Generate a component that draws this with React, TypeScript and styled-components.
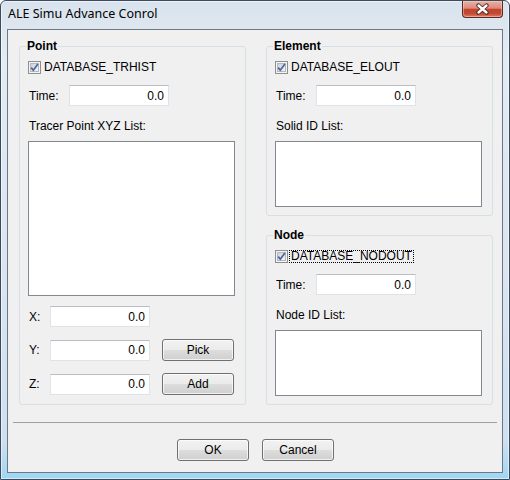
import React from 'react';
import styled, { createGlobalStyle } from 'styled-components';

const GlobalStyle = createGlobalStyle`
    html, body {
        margin: 0;
        padding: 0;
        background: #ffffff;
    }
    body {
        font-family: "Liberation Sans", Arial, sans-serif;
        font-size: 12px;
        color: #000000;
    }
`;

/* tslint:disable:variable-name */
const Window = styled.div`
    width: 510px;
    height: 480px;
    box-sizing: border-box;
    display: flex;
    flex-direction: column;
    padding: 0 6px 6px 6px;
    border: 1px solid #3b4a5c;
    border-radius: 6px 6px 0 0;
    background: linear-gradient(180deg, #d9e3ed 0%, #e3ebf3 12%, #dae5f0 55%, #cfe0f1 92%, #9fd6f3 100%);
    box-shadow: inset 0 0 0 1px rgba(255, 255, 255, 0.55);
`;

const TitleBar = styled.div`
    height: 28px;
    flex: none;
    display: flex;
    align-items: flex-start;
    justify-content: space-between;
`;

const Title = styled.div`
    margin: 5px 0 0 1px;
    font-family: "Noto Sans", "Open Sans", sans-serif;
    font-size: 12.5px;
    line-height: 16px;
    color: #000000;
`;

const CloseButton = styled.div`
    width: 41px;
    height: 17px;
    box-sizing: border-box;
    display: flex;
    align-items: center;
    justify-content: center;
    border: 1px solid #5b2a24;
    border-top: none;
    border-radius: 0 0 4px 4px;
    background: linear-gradient(180deg, #eab0a3 0%, #dc8b7b 45%, #c4432d 52%, #c24a33 78%, #de7d62 100%);
    box-shadow: inset 0 0 0 1px rgba(255, 220, 210, 0.45);
`;

const Client = styled.div`
    flex: 1;
    display: flex;
    flex-direction: column;
    border: 1px solid #6c7886;
    background: #f0f0f0;
    padding: 10px 0 11px 0;
`;

const Columns = styled.div`
    display: flex;
    align-items: flex-start;
    gap: 20px;
    padding: 0 9px 0 11px;
`;

const Column = styled.div`
    display: flex;
    flex-direction: column;
    gap: 13px;
`;

const Group = styled.fieldset`
    width: 227px;
    box-sizing: border-box;
    margin: 0;
    padding: 0;
    min-width: 0;
    border: 1px solid #d5dfe5;
    border-radius: 3px;
`;

const GroupTitle = styled.legend`
    margin-left: 6px;
    padding: 0 1px;
    font-weight: bold;
    font-size: 12px;
    line-height: 13px;
`;

const GroupBody = styled.div<{ $bottom: number }>`
    display: flex;
    flex-direction: column;
    padding: 8px 10px ${props => props.$bottom}px 8px;
`;

const CheckRow = styled.div`
    display: flex;
    align-items: flex-start;
    height: 13px;
`;

const CheckLabel = styled.span<{ $focused?: boolean }>`
    margin-left: 1px;
    padding: 0 1px;
    line-height: 11px;
    border: 1px ${props => (props.$focused ? 'dotted #000000' : 'solid transparent')};
`;

const FieldRow = styled.div<{ $top: number }>`
    display: flex;
    align-items: center;
    margin-top: ${props => props.$top}px;
`;

const FieldLabel = styled.span<{ $width: number }>`
    width: ${props => props.$width}px;
    padding-left: 1px;
    box-sizing: border-box;
    line-height: 14px;
`;

const TextBox = styled.input`
    width: 100px;
    height: 21px;
    box-sizing: border-box;
    margin: 0;
    padding: 0 4px;
    font: inherit;
    line-height: 14px;
    text-align: right;
    color: #000000;
    background: #ffffff;
    border: 1px solid #dfe3e8;
    border-top-color: #b9bdc4;
    outline: none;
`;

const ListLabel = styled.div`
    margin-top: 13px;
    padding-left: 1px;
    line-height: 14px;
`;

const ListBox = styled.div<{ $height: number }>`
    margin-top: 8px;
    width: 207px;
    height: ${props => props.$height}px;
    box-sizing: border-box;
    background: #ffffff;
    border: 1px solid #828790;
`;

const PushButton = styled.button<{ $gapLeft?: number }>`
    width: 72px;
    height: 22px;
    box-sizing: border-box;
    margin: 0 0 0 ${props => props.$gapLeft ?? 0}px;
    padding: 0;
    font: inherit;
    line-height: 14px;
    color: #000000;
    border: 1px solid #707070;
    border-radius: 3px;
    background: linear-gradient(180deg, #f2f2f2 0%, #ebebeb 48%, #dddddd 52%, #cfcfcf 100%);
    box-shadow: inset 0 0 0 1px rgba(255, 255, 255, 0.7);
`;

const Separator = styled.div`
    margin: 17px 5px 0 5px;
    height: 0;
    border-top: 1px solid #a0a0a0;
`;

const ButtonBar = styled.div`
    display: flex;
    justify-content: center;
    gap: 13px;
    margin-top: 16px;
    padding-left: 1px;
`;

const CloseGlyph = () => (
    <svg width="15" height="12" viewBox="0 0 15 12">
        <path d="M3.5 2.5 L11.5 9.5 M11.5 2.5 L3.5 9.5" stroke="#4a1f1a" strokeWidth="4.2" strokeLinecap="round" fill="none" />
        <path d="M3.5 2.5 L11.5 9.5 M11.5 2.5 L3.5 9.5" stroke="#ffffff" strokeWidth="2.4" strokeLinecap="round" fill="none" />
    </svg>
);

const CheckBox = () => (
    <svg width="13" height="13" viewBox="0 0 13 13">
        <defs>
            <linearGradient id="chkFill" x1="0" y1="0" x2="1" y2="1">
                <stop offset="0" stopColor="#cbcfd5" />
                <stop offset="1" stopColor="#f7f7f7" />
            </linearGradient>
        </defs>
        <rect x="0.5" y="0.5" width="12" height="12" fill="#f4f4f4" stroke="#8e8f8f" />
        <rect x="2.5" y="2.5" width="8" height="8" fill="url(#chkFill)" stroke="#b4b9bf" />
        <path d="M3.2 6.6 L5.3 9.2 L9.9 3.1" stroke="#4b62a0" strokeWidth="1.7" fill="none" />
    </svg>
);

interface IRecordGroupProps {
    title: string;
    option: string;
    listLabel: string;
    listHeight: number;
    focused?: boolean;
    bottom: number;
    children?: React.ReactNode;
}

const RecordGroup = ({ title, option, listLabel, listHeight, focused, bottom, children }: IRecordGroupProps) => (
    <Group>
        <GroupTitle>{title}</GroupTitle>
        <GroupBody $bottom={bottom}>
            <CheckRow>
                <CheckBox />
                <CheckLabel $focused={focused}>{option}</CheckLabel>
            </CheckRow>
            <FieldRow $top={11}>
                <FieldLabel $width={41}>Time:</FieldLabel>
                <TextBox readOnly value="0.0" />
            </FieldRow>
            <ListLabel>{listLabel}</ListLabel>
            <ListBox $height={listHeight} />
            {children}
        </GroupBody>
    </Group>
);

const App = () => {
    return (
        <>
            <GlobalStyle />
            <Window>
                <TitleBar>
                    <Title>ALE Simu Advance Conrol</Title>
                    <CloseButton>
                        <CloseGlyph />
                    </CloseButton>
                </TitleBar>
                <Client>
                    <Columns>
                        <RecordGroup
                            title="Point"
                            option="DATABASE_TRHIST"
                            listLabel="Tracer Point XYZ List:"
                            listHeight={155}
                            bottom={9}
                        >
                            <FieldRow $top={10}>
                                <FieldLabel $width={22}>X:</FieldLabel>
                                <TextBox readOnly value="0.0" />
                            </FieldRow>
                            <FieldRow $top={12}>
                                <FieldLabel $width={22}>Y:</FieldLabel>
                                <TextBox readOnly value="0.0" />
                                <PushButton $gapLeft={12}>Pick</PushButton>
                            </FieldRow>
                            <FieldRow $top={12}>
                                <FieldLabel $width={22}>Z:</FieldLabel>
                                <TextBox readOnly value="0.0" />
                                <PushButton $gapLeft={12}>Add</PushButton>
                            </FieldRow>
                        </RecordGroup>
                        <Column>
                            <RecordGroup
                                title="Element"
                                option="DATABASE_ELOUT"
                                listLabel="Solid ID List:"
                                listHeight={66}
                                bottom={8}
                            />
                            <RecordGroup
                                title="Node"
                                option="DATABASE_NODOUT"
                                listLabel="Node ID List:"
                                listHeight={66}
                                focused
                                bottom={8}
                            />
                        </Column>
                    </Columns>
                    <Separator />
                    <ButtonBar>
                        <PushButton>OK</PushButton>
                        <PushButton>Cancel</PushButton>
                    </ButtonBar>
                </Client>
            </Window>
        </>
    );
};

export default App;
